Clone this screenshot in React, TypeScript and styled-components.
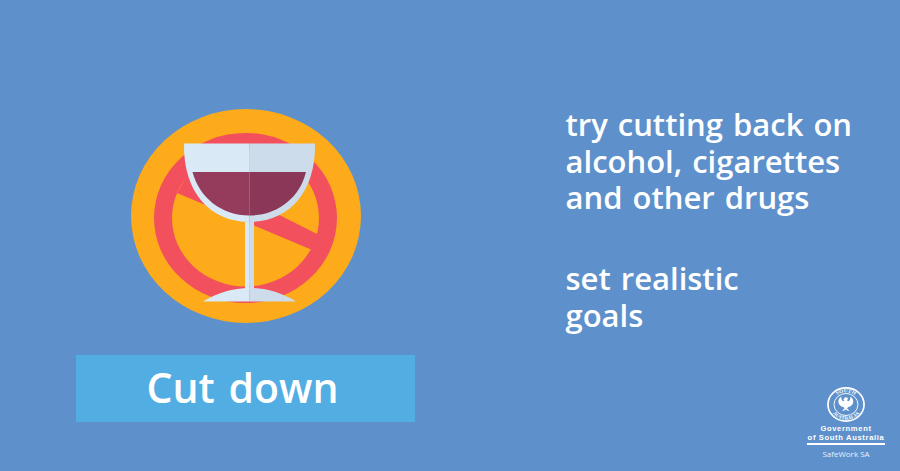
import React from "react";
import styled, { createGlobalStyle } from "styled-components";

const Global = createGlobalStyle`
  html, body { margin: 0; padding: 0; background: #5e91cc; }
`;

const Stage = styled.main`
  width: 900px;
  height: 471px;
  overflow: hidden;
  background: #5e91cc;
  display: flex;
  font-family: "Open Sans", "Noto Sans", sans-serif;
  color: #fff;
`;

const LeftColumn = styled.section`
  width: 339px;
  margin-left: 76px;
  padding-top: 100px;
  display: flex;
  flex-direction: column;
`;

const Illustration = styled.svg`
  display: block;
  width: 339px;
  height: 240px;
`;

const Banner = styled.h1`
  margin: 15px 0 0;
  height: 67px;
  background: #52ade2;
  display: flex;
  align-items: center;
  justify-content: center;
  font-size: 41px;
  font-weight: 600;
  word-spacing: 3px;
  line-height: 1;
  padding: 0 6px 3px 0;
  box-sizing: border-box;
`;

const RightColumn = styled.section`
  flex: 1;
  margin-left: 150.5px;
  padding-top: 106px;
  padding-bottom: 12px;
  display: flex;
  flex-direction: column;
`;

const Tips = styled.div`
  display: flex;
  flex-direction: column;
  gap: 44.5px;
`;

const Tip = styled.p`
  margin: 0;
  font-size: 31px;
  font-weight: 600;
  word-spacing: 2px;
  line-height: 36.6px;
`;

const Logo = styled.footer`
  margin-top: auto;
  margin-right: 14px;
  align-self: flex-end;
  width: 80px;
  display: flex;
  flex-direction: column;
  align-items: center;
`;

const Crest = styled.svg`
  display: block;
  width: 38px;
  height: 35px;
`;

const GovName = styled.div`
  margin-top: 1.5px;
  font-family: "Liberation Sans", sans-serif;
  font-size: 7.6px;
  font-weight: 700;
  line-height: 9px;
  letter-spacing: 0.65px;
  text-align: center;
  white-space: nowrap;
`;

const Rule = styled.div`
  width: 78px;
  height: 2px;
  margin-top: 1.5px;
  background: #fff;
`;

const Agency = styled.div`
  margin-top: 4px;
  font-size: 8px;
  line-height: 10px;
  color: #e6f0f9;
  white-space: nowrap;
`;

const App = () => (
  <Stage>
    <Global />
    <LeftColumn>
      <Illustration viewBox="76 100 339 240">
        <ellipse cx="246" cy="216" rx="115" ry="107" fill="#fdaa1b" />
        <path
          fillRule="evenodd"
          fill="#f2505d"
          d="M154 218a91.5 85 0 1 0 183 0a91.5 85 0 1 0-183 0ZM172 218a73.5 68.5 0 1 1 147 0a73.5 68.5 0 1 1-147 0Z"
        />
        <path fill="#f2505d" d="M190 170 L321 236 L311 249.5 L177 193 Z" />
        <path fill="#d9e9f5" d="M184 143.5H249.5V222C210 222 183 192 184 143.5Z" />
        <path fill="#cddceb" d="M249.5 143.5H315C316 192 289 222 249.5 222Z" />
        <path fill="#953b5c" d="M192.5 172H249.5V215.5C221 215.5 199 197 192.5 172Z" />
        <path fill="#8b3858" d="M249.5 172H306C300 197 278 215.5 249.5 215.5Z" />
        <rect x="245" y="222" width="4.5" height="68" fill="#d9e9f5" />
        <rect x="249.5" y="222" width="4.5" height="68" fill="#cddceb" />
        <path fill="#d9e9f5" d="M203 301.5C217 293 233 288 249.5 288V301.5Z" />
        <path fill="#cddceb" d="M249.5 288C266 288 282 293 296 301.5H249.5Z" />
      </Illustration>
      <Banner>Cut down</Banner>
    </LeftColumn>
    <RightColumn>
      <Tips>
        <Tip>
          try cutting back on
          <br />
          alcohol, cigarettes
          <br />
          and other drugs
        </Tip>
        <Tip>
          set realistic
          <br />
          goals
        </Tip>
      </Tips>
      <Logo>
        <Crest viewBox="0 0 40 40" preserveAspectRatio="none">
          <defs>
            <path id="crestTop" d="M6 20a14 14 0 0 1 28 0" />
            <path id="crestBottom" d="M2.6 20a17.4 17.4 0 0 0 34.8 0" />
          </defs>
          <circle cx="20" cy="20" r="19" fill="none" stroke="#fff" strokeWidth="1.8" />
          <circle cx="20" cy="20" r="12.6" fill="none" stroke="#fff" strokeWidth="1" />
          <text fontFamily="Liberation Serif, serif" fontWeight="700" fontSize="5.6" fill="#fff" textAnchor="middle">
            <textPath href="#crestTop" startOffset="50%">SOUTH</textPath>
          </text>
          <text fontFamily="Liberation Serif, serif" fontWeight="700" fontSize="5.6" fill="#fff" textAnchor="middle">
            <textPath href="#crestBottom" startOffset="50%">AUSTRALIA</textPath>
          </text>
          <path
            fill="#fff"
            d="M20 11.5c-1.2 0-1.9.9-1.8 2l-1.4 1.4 1.6.1c-.3 1.2-1.7 1.6-2.4.5-.9-1.5-1.2-3.3-.8-4.7-2.4 1.4-3.8 4.2-3.1 7.2.6 2.6 2.6 4.2 5 4.8l1.5 1.4-2.6 3h1.9l1.5-1.9.4 1.9.4-1.9 1.5 1.9h1.9l-2.6-3 1.5-1.4c2.4-.6 4.4-2.2 5-4.8.7-3-.7-5.8-3.1-7.2.4 1.4.1 3.2-.8 4.7-.7 1.1-2.1.7-2.4-.5l.7-1.3c.5-.9-.5-2-2.4-2Z"
          />
        </Crest>
        <GovName>
          Government
          <br />
          of South Australia
        </GovName>
        <Rule />
        <Agency>SafeWork SA</Agency>
      </Logo>
    </RightColumn>
  </Stage>
);

export default App;
